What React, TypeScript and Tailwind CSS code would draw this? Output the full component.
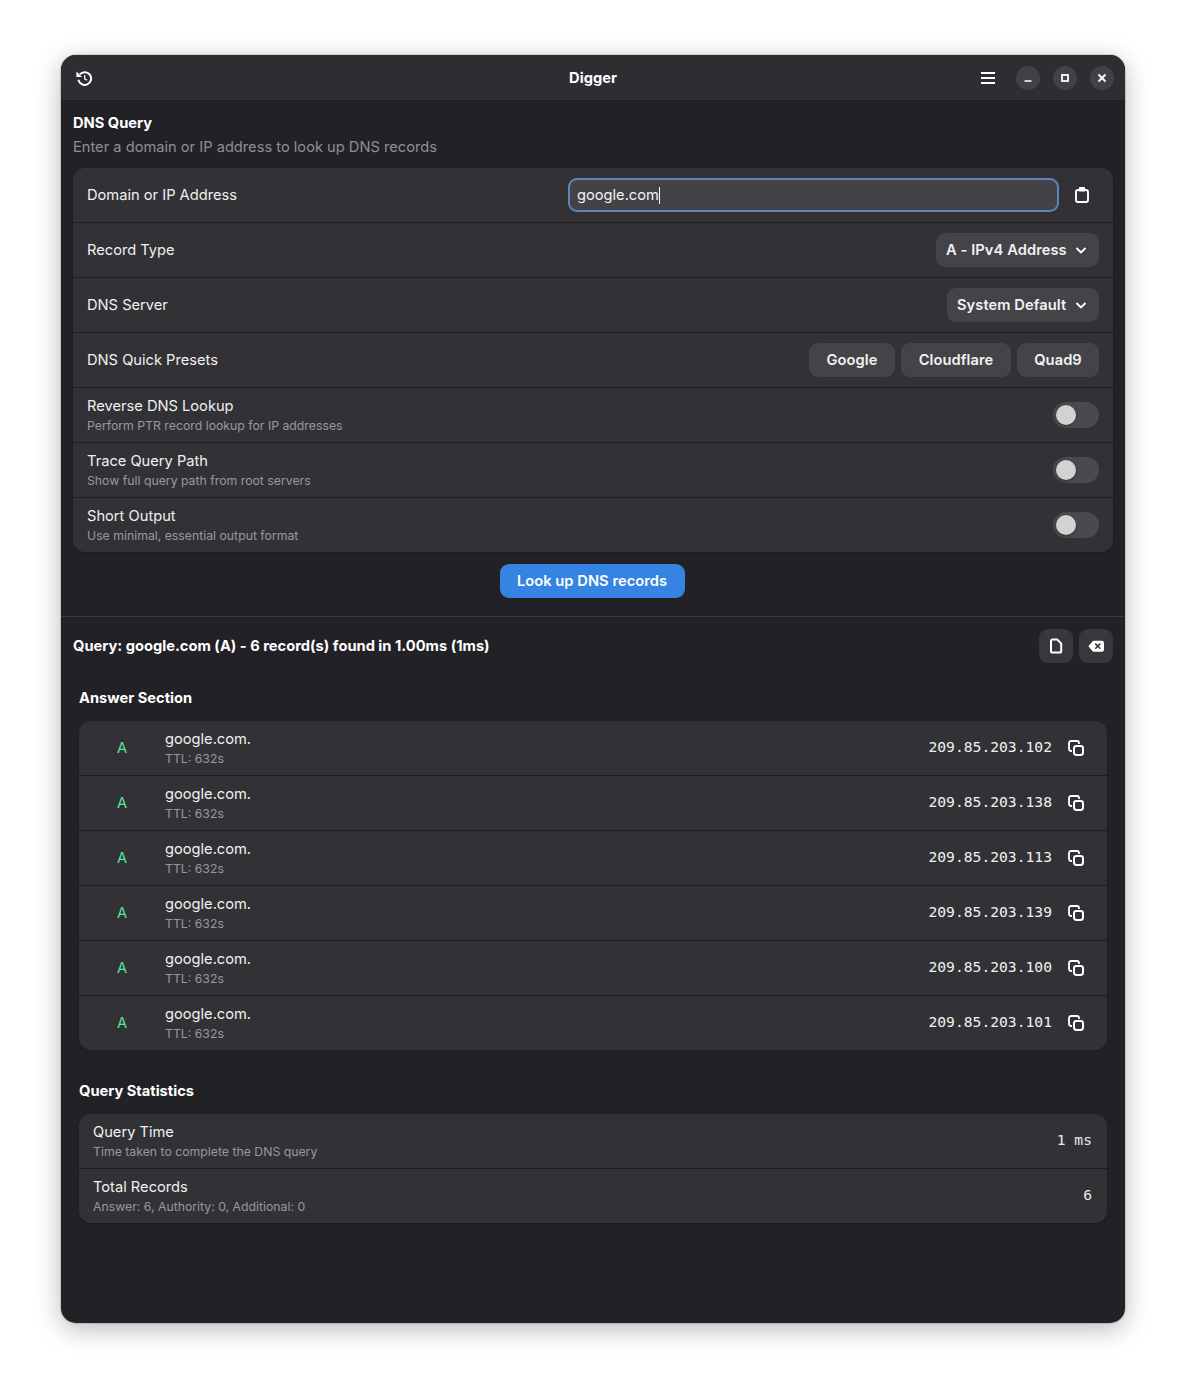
import React from "react";

const I = "font-['Inter','Noto_Sans',sans-serif]";
const MONO = "font-['DejaVu_Sans_Mono','Liberation_Mono',monospace]";

function Ico({ children, className = "" }: { children: React.ReactNode; className?: string }) {
  return (
    <svg viewBox="0 0 16 16" width="16" height="16" fill="none" stroke="#fff" strokeWidth="2" className={className}>
      {children}
    </svg>
  );
}

const HistoryIcon = () => (
  <Ico>
    <path d="M3.8 4.4A6.4 6.4 0 1 1 2.4 9.8" strokeWidth="2" />
    <path d="M0.4 1.4V7h5.6z" fill="#fff" stroke="none" />
    <path d="M8.7 5v3.8l2.4 1.5" strokeWidth="1.2" />
  </Ico>
);
const MenuIcon = () => (
  <Ico>
    <path d="M1 3h14M1 8h14M1 13h14" strokeWidth="1.9" />
  </Ico>
);
const ClipboardIcon = () => (
  <Ico>
    <rect x="2" y="3" width="12" height="12" rx="2" strokeWidth="1.9" />
    <path d="M5 0.4a.6.6 0 0 1 .6-.4h4.8a.6.6 0 0 1 .6.4V4.4H5z" fill="#fff" stroke="none" />
  </Ico>
);
const FileIcon = () => (
  <Ico>
    <path d="M3 3a1.6 1.6 0 0 1 1.6-1.6h4.6L13.2 5.6V13a1.6 1.6 0 0 1-1.6 1.6H4.6A1.6 1.6 0 0 1 3 13z" strokeWidth="2" />
  </Ico>
);
const BackspaceIcon = () => (
  <svg viewBox="0 0 16 16" width="16" height="16">
    <path
      fillRule="evenodd"
      fill="#fff"
      d="M5.6 2.7H14a2 2 0 0 1 2 2v7a2 2 0 0 1-2 2H5.6a1.5 1.5 0 0 1-1-.5L.4 8.2l4.2-5a1.5 1.5 0 0 1 1-.5zM7.8 5.1 6.7 6.2l2 2-2 2 1.1 1.1 2-2 2 2 1.1-1.1-2-2 2-2-1.1-1.1-2 2z"
    />
  </svg>
);
const CopyIcon = () => (
  <Ico className="ml-[16px] shrink-0">
    <path d="M4 11H3a2 2 0 0 1-2-2V3a2 2 0 0 1 2-2h6a2 2 0 0 1 2 2v1" strokeWidth="1.8" />
    <rect x="6" y="6" width="9" height="9" rx="2.4" strokeWidth="2" />
  </Ico>
);
const Chevron = () => (
  <svg viewBox="0 0 16 16" width="16" height="16" fill="none" stroke="#fff" strokeWidth="1.8">
    <path d="M3.5 6l4.5 4.5L12.5 6" />
  </svg>
);

function WinBtn({ children }: { children: React.ReactNode }) {
  return <div className="w-6 h-6 rounded-full bg-[#424246] flex items-center justify-center">{children}</div>;
}

function Row({ children, last }: { children: React.ReactNode; last?: boolean }) {
  return (
    <div className={`px-[14px] flex items-center justify-between ${last ? "h-[54px]" : "h-[55px] border-b border-[#1f1f23]"}`}>
      {children}
    </div>
  );
}

function Label2({ title, sub }: { title: string; sub: string }) {
  return (
    <div className="flex flex-col">
      <span className="text-[14.67px] leading-[18px] text-[#f0f0f0]">{title}</span>
      <span className="text-[12.27px] leading-[15px] mt-[3px] text-[#98989b]">{sub}</span>
    </div>
  );
}

function Toggle() {
  return (
    <div className="w-[46px] h-[26px] rounded-full bg-[#4a4a4e] relative">
      <div className="absolute left-[3px] top-[3px] w-5 h-5 rounded-full bg-[#d2d2d2] shadow-[0_1px_3px_rgba(0,0,0,0.35)]" />
    </div>
  );
}

function Pill({ children, w }: { children: React.ReactNode; w: string }) {
  return (
    <div className={`h-[34px] rounded-[9px] bg-[#444448] flex items-center justify-center font-semibold tracking-[0.08px] text-[14.67px] text-[#f2f2f2] ${w}`}>
      {children}
    </div>
  );
}

function Select({ label, w }: { label: string; w: string }) {
  return (
    <div className={`h-[34px] rounded-[9px] bg-[#444448] flex items-center justify-between px-[10px] font-semibold tracking-[0.08px] text-[14.67px] text-[#f2f2f2] ${w}`}>
      <span>{label}</span>
      <Chevron />
    </div>
  );
}

function IconBtn({ children }: { children: React.ReactNode }) {
  return <div className="w-[34px] h-[34px] rounded-[9px] bg-[#38383c] flex items-center justify-center">{children}</div>;
}

const ips = ["102", "138", "113", "139", "100", "101"];

export default function App() {
  return (
    <div className={`w-[1186px] h-[1390px] bg-white pt-[55px] pl-[61px] overflow-hidden ${I}`}>
      <div className="w-[1064px] h-[1268px] rounded-[15px] bg-[#222226] overflow-hidden shadow-[0_0_0_1px_rgba(0,0,0,0.12),0_6px_26px_rgba(0,0,0,0.28)] text-white flex flex-col">
        <header className="h-[46px] shrink-0 bg-[#2e2e32] border-b border-[#1d1d20] grid grid-cols-[1fr_auto_1fr] items-center pl-[15px] pr-[11px]">
          <HistoryIcon />
          <div className="font-bold text-[14.67px] tracking-[0.02px] pr-[4px]">Digger</div>
          <div className="flex items-center justify-end">
            <MenuIcon />
            <div className="flex items-center gap-[13px] ml-[20px]">
              <WinBtn>
                <svg viewBox="0 0 16 16" width="16" height="16"><path d="M4.5 11h7" stroke="#fff" strokeWidth="1.6" /></svg>
              </WinBtn>
              <WinBtn>
                <svg viewBox="0 0 16 16" width="16" height="16"><rect x="5" y="5" width="6" height="6" fill="none" stroke="#fff" strokeWidth="1.8" /></svg>
              </WinBtn>
              <WinBtn>
                <svg viewBox="0 0 16 16" width="16" height="16"><path d="M4.5 4.5l7 7M11.5 4.5l-7 7" stroke="#fff" strokeWidth="1.9" /></svg>
              </WinBtn>
            </div>
          </div>
        </header>

        <section className="px-3 pt-[13px] pb-[18px] border-b border-[#3a3a3e]">
          <div className="font-bold text-[14.67px] leading-[18px]">DNS Query</div>
          <div className="text-[14.67px] leading-[18px] mt-[6px] text-[#8f8f92]">Enter a domain or IP address to look up DNS records</div>
          <div className="mt-[12px] rounded-[12px] bg-[#323236] shadow-[0_1px_2px_rgba(0,0,0,0.2)]">
            <Row>
              <span className="text-[14.67px] text-[#f0f0f0]">Domain or IP Address</span>
              <div className="flex items-center gap-[15px] pr-[9px]">
                <div className="w-[491px] h-[34px] rounded-[9px] border-2 border-[#5a86bd] bg-[#434347] flex items-center px-[7px] text-[14.67px] text-[#f2f2f2]">
                  google.com<span className="inline-block w-px h-[17px] bg-white" />
                </div>
                <ClipboardIcon />
              </div>
            </Row>
            <Row>
              <span className="text-[14.67px] text-[#f0f0f0]">Record Type</span>
              <Select label="A - IPv4 Address" w="w-[163px]" />
            </Row>
            <Row>
              <span className="text-[14.67px] text-[#f0f0f0]">DNS Server</span>
              <Select label="System Default" w="w-[152px]" />
            </Row>
            <Row>
              <span className="text-[14.67px] text-[#f0f0f0]">DNS Quick Presets</span>
              <div className="flex gap-[6px]">
                <Pill w="w-[86px]">Google</Pill>
                <Pill w="w-[110px]">Cloudflare</Pill>
                <Pill w="w-[82px]">Quad9</Pill>
              </div>
            </Row>
            <Row>
              <Label2 title="Reverse DNS Lookup" sub="Perform PTR record lookup for IP addresses" />
              <Toggle />
            </Row>
            <Row>
              <Label2 title="Trace Query Path" sub="Show full query path from root servers" />
              <Toggle />
            </Row>
            <Row last>
              <Label2 title="Short Output" sub="Use minimal, essential output format" />
              <Toggle />
            </Row>
          </div>
          <div className="mt-[12px] flex justify-center pr-px">
            <div className="w-[185px] h-[34px] rounded-[9px] bg-[#3584e4] flex items-center justify-center font-semibold tracking-[0.05px] text-[14.67px] text-white pr-px">
              Look up DNS records
            </div>
          </div>
        </section>

        <section className="px-3 pt-[12px]">
          <div className="flex items-center justify-between h-[34px]">
            <span className="font-bold text-[14.67px] tracking-[0.01px]">Query: google.com (A) - 6 record(s) found in 1.00ms (1ms)</span>
            <div className="flex gap-[6px]">
              <IconBtn><FileIcon /></IconBtn>
              <IconBtn><BackspaceIcon /></IconBtn>
            </div>
          </div>

          <div className="px-[6px]">
            <div className="mt-[26px] font-bold text-[14.67px] leading-[18px]">Answer Section</div>
            <div className="mt-[14px] rounded-[12px] bg-[#323236] shadow-[0_1px_2px_rgba(0,0,0,0.2)]">
              {ips.map((ip, i) => (
                <div
                  key={ip}
                  className={`flex items-center pr-[23px] ${i === 5 ? "h-[54px]" : "h-[55px] border-b border-[#1f1f23]"}`}
                >
                  <span className="w-[86px] text-center text-[14.67px] text-[#5be39a]">A</span>
                  <div className="flex flex-col">
                    <span className="text-[14.67px] leading-[18px] text-[#f0f0f0]">google.com.</span>
                    <span className="text-[12.27px] leading-[15px] mt-[3px] text-[#98989b]">TTL: 632s</span>
                  </div>
                  <span className={`ml-auto pb-[3px] text-[14.67px] text-[#f0f0f0] ${MONO}`}>209.85.203.{ip}</span>
                  <CopyIcon />
                </div>
              ))}
            </div>

            <div className="mt-[32px] font-bold text-[14.67px] leading-[18px]">Query Statistics</div>
            <div className="mt-[14px] rounded-[12px] bg-[#323236] shadow-[0_1px_2px_rgba(0,0,0,0.2)]">
              <Row>
                <Label2 title="Query Time" sub="Time taken to complete the DNS query" />
                <span className={`pb-[2px] pr-px text-[14.67px] text-[#e8e8e8] ${MONO}`}>1 ms</span>
              </Row>
              <Row last>
                <Label2 title="Total Records" sub="Answer: 6, Authority: 0, Additional: 0" />
                <span className={`pb-[2px] pr-px text-[14.67px] text-[#e8e8e8] ${MONO}`}>6</span>
              </Row>
            </div>
          </div>
        </section>
      </div>
    </div>
  );
}
